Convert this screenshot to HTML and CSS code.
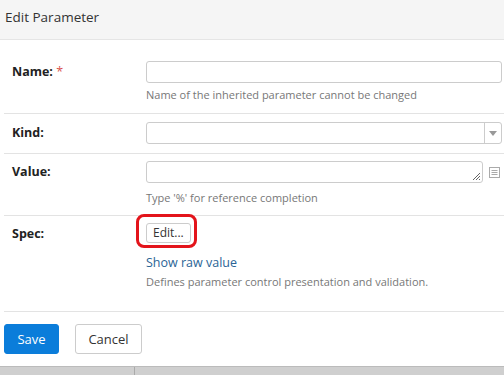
FILE: index.html
```html
<!DOCTYPE html>
<html lang="en">
<head>
  <meta charset="UTF-8" />
  <title>Edit Parameter</title>
  <link rel="stylesheet" href="styles.css">
</head>
<body>
  <div class="modal">
    <div class="modal-header">Edit Parameter</div>

    <div class="modal-body">
      <div class="form-row first">
        <label class="form-label">Name: <span class="required">*</span></label>
        <div class="form-control-col">
          <input class="text-input" type="text" value="" readonly>
          <div class="help">Name of the inherited parameter cannot be changed</div>
        </div>
      </div>

      <div class="form-row">
        <label class="form-label">Kind:</label>
        <div class="form-control-col">
          <div class="select">
            <span class="select-value"></span>
            <span class="select-arrow"></span>
          </div>
        </div>
      </div>

      <div class="form-row value">
        <label class="form-label">Value:</label>
        <div class="form-control-col">
          <div class="value-line">
            <div class="textarea">
              <svg class="grip" width="9" height="9" viewBox="0 0 9 9">
                <path d="M8 1L1 8M8 4L4 8M8 7L7 8" stroke="#666" stroke-width="1" fill="none"/>
              </svg>
            </div>
            <svg class="list-icon" width="11" height="11" viewBox="0 0 11 11">
              <rect x="0.5" y="0.5" width="10" height="10" fill="none" stroke="#aaa"/>
              <path d="M2.5 3.5h6M2.5 5.5h6M2.5 7.5h6" stroke="#aaa"/>
            </svg>
          </div>
          <div class="help">Type '%' for reference completion</div>
        </div>
      </div>

      <div class="form-row spec">
        <label class="form-label">Spec:</label>
        <div class="form-control-col">
          <div class="edit-wrap">
            <button class="btn-small">Edit...</button>
            <span class="highlight"></span>
          </div>
          <a class="raw-link" href="#">Show raw value</a>
          <div class="help">Defines parameter control presentation and validation.</div>
        </div>
      </div>
    </div>

    <div class="modal-footer">
      <button class="btn btn-primary">Save</button>
      <button class="btn btn-default">Cancel</button>
    </div>
  </div>
  <div class="bottom-bar"><span class="bar-split"></span></div>
</body>
</html>
```

FILE: styles.css
```css
body {
  margin: 0;
  font-family: "Open Sans", "Noto Sans", sans-serif;
  background: #fff;
  color: #222;
  width: 504px;
  height: 376px;
  overflow: hidden;
}

.modal-header {
  height: 40px;
  box-sizing: border-box;
  background: #f5f5f5;
  border-bottom: 1px solid #e5e5e5;
  padding: 8px 5px 0;
  font-size: 13.5px;
  color: #333;
}

.modal-body {
  padding-left: 4px;
}

.form-row {
  display: grid;
  grid-template-columns: 142px 1fr;
  border-bottom: 1px solid #e3e3e3;
  padding: 8px 2px 9px 0;
}

.form-row.first {
  padding-top: 21px;
  padding-bottom: 10px;
}

.form-label {
  padding-left: 8px;
  font-weight: bold;
  font-size: 12.5px;
  line-height: 22px;
}

.required {
  color: #d9534f;
  font-weight: normal;
}

.text-input {
  display: block;
  width: 100%;
  height: 22px;
  box-sizing: border-box;
  border: 1px solid #ccc;
  border-radius: 3px;
  margin: 0;
  padding: 0 4px;
  font: inherit;
}

.help {
  font-size: 11px;
  color: #777;
  margin-top: 3px;
  line-height: 17px;
}

.select {
  display: flex;
  height: 22px;
  box-sizing: border-box;
  border: 1px solid #ccc;
  border-radius: 3px;
}

.select-value {
  flex: 1;
}

.select-arrow {
  width: 16px;
  border-left: 1px solid #ccc;
  position: relative;
}

.select-arrow::after {
  content: "";
  position: absolute;
  left: 4px;
  top: 8px;
  border-left: 4px solid transparent;
  border-right: 4px solid transparent;
  border-top: 5px solid #999;
}

.form-row.value {
  padding-top: 7px;
  padding-bottom: 9px;
}

.form-row.value .help {
  margin-top: 6px;
}

.value-line {
  display: flex;
  align-items: center;
  gap: 6px;
}

.textarea {
  flex: 1;
  height: 22px;
  box-sizing: border-box;
  border: 1px solid #ccc;
  border-radius: 3px;
  position: relative;
}

.grip {
  position: absolute;
  right: 1px;
  bottom: 1px;
}

.list-icon {
  margin-right: 2px;
}

.form-row.spec {
  padding-top: 7px;
  padding-bottom: 21px;
}

.edit-wrap {
  position: relative;
  display: inline-block;
  vertical-align: top;
}

.btn-small {
  display: block;
  font: inherit;
  font-size: 12px;
  color: #333;
  background: #fff;
  border: 1px solid #ccc;
  border-radius: 3px;
  height: 20px;
  padding: 0 6px;
  line-height: 18px;
}

.highlight {
  position: absolute;
  left: -10px;
  top: -9px;
  width: 61px;
  height: 34px;
  box-sizing: border-box;
  border: 3px solid #e3141b;
  border-radius: 8px;
}

.raw-link {
  display: block;
  margin-top: 9px;
  font-size: 12.5px;
  color: #2a6496;
  text-decoration: none;
  line-height: 18px;
}

.spec .help {
  margin-top: 1px;
}

.modal-footer {
  padding: 12px 4px 12px;
  display: flex;
  gap: 16px;
}

.btn {
  font: inherit;
  font-size: 13px;
  height: 30px;
  border-radius: 3px;
  padding: 0 12px;
}

.btn-primary {
  background: #0b7dda;
  color: #fff;
  border: 1px solid #0b7dda;
  width: 55px;
}

.btn-default {
  background: #fff;
  color: #333;
  border: 1px solid #ccc;
  width: 67px;
}

.bottom-bar {
  position: relative;
  height: 8px;
  background: #cfcfcf;
  border-top: 1px solid #bbb;
}

.bar-split {
  position: absolute;
  left: 134px;
  top: 0;
  width: 1px;
  height: 8px;
  background: #aaa;
}
```
